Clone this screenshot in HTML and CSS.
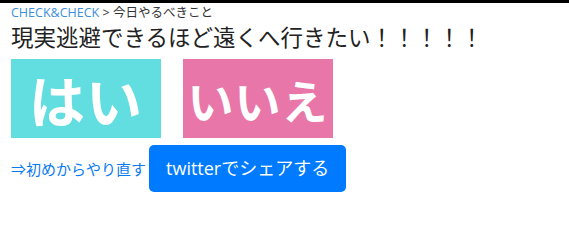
FILE: index.html
```html
<!DOCTYPE html>
<html lang="ja">
<head>
  <meta charset="UTF-8">
  <meta name="viewport" content="width=device-width, initial-scale=1.0">
  <title>今日やるべきこと</title>
  <link rel="stylesheet" href="styles.css">
</head>
<body>

  <div class="page">
    <!-- パンくず -->
    <div class="breadcrumb">
      <a href="#">CHECK&amp;CHECK</a> &gt; 今日やるべきこと
    </div>

    <h1 class="question">現実逃避できるほど遠くへ行きたい！！！！！</h1>

    <!-- 回答ボタン -->
    <div class="answers">
      <a href="#" class="answer answer-yes">はい</a>
      <a href="#" class="answer answer-no">いいえ</a>
    </div>

    <div class="actions">
      <a href="#" class="restart">⇒初めからやり直す</a>
      <a href="#" class="btn-share">twitterでシェアする</a>
    </div>
  </div>

</body>
</html>
```

FILE: styles.css
```css
body {
  margin: 0;
  border-top: 3px solid #000;
  font-family: "Open Sans", "Noto Sans CJK JP", sans-serif;
  color: #212529;
  background-color: #fff;
}

a {
  text-decoration: none;
}

.page {
  padding: 0 11px;
}

.breadcrumb {
  margin-top: 2px;
  font-size: 12.5px;
  line-height: 16px;
  color: #333;
}

.breadcrumb a {
  color: #3b8fd9;
}

.question {
  margin: 0;
  font-size: 22.5px;
  font-weight: normal;
  line-height: 33px;
  color: #222;
}

.answers {
  display: flex;
  gap: 22px;
  margin-top: 5px;
}

.answer {
  display: flex;
  align-items: center;
  justify-content: center;
  width: 150px;
  height: 79px;
  color: #fff;
  font-family: "Noto Sans CJK JP", sans-serif;
  font-weight: 700;
  letter-spacing: 1px;
}

.answer-yes {
  background-color: #62dde0;
  font-size: 56px;
}

.answer-no {
  background-color: #e976a8;
  font-size: 46px;
}

.actions {
  display: flex;
  align-items: center;
  margin-top: 7px;
}

.restart {
  color: #0a7bef;
  font-size: 15px;
  margin-right: 3px;
}

.btn-share {
  display: inline-block;
  padding: 10px 17px;
  font-size: 18px;
  line-height: 27px;
  color: #fff;
  background-color: #007bff;
  border-radius: 5px;
}
```
